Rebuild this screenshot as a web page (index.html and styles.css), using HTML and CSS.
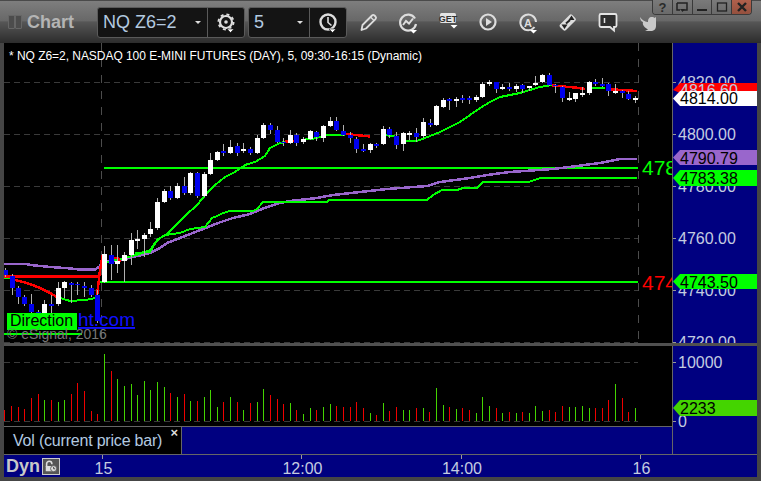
FILE: index.html
```html
<!DOCTYPE html>
<html lang="en">
<head>
<meta charset="utf-8">
<title>Chart</title>
<link rel="stylesheet" href="styles.css">
</head>
<body>
<div class="window">
  <header class="toolbar">
    <div class="grip"><span class="grip-bar"></span><span class="grip-bar"></span></div>
    <div class="title">Chart</div>
    <div class="combo symbol">
      <div class="combo-field"><span class="combo-text">NQ Z6=2</span><span class="caret"></span></div>
      <div class="combo-btn">
        <svg class="icon" viewBox="0 0 24 24"><circle cx="12" cy="12" r="6" fill="none" stroke="#ddd" stroke-width="2.200"/><circle cx="12" cy="12" r="7.600" fill="none" stroke="#ddd" stroke-width="1.800" stroke-dasharray="3 3"/><circle cx="12" cy="12" r="1.800" fill="#ddd"/><path d="M13 19h7l-3.500 3.500z" fill="#fff" stroke="#111" stroke-width=".6"/></svg>
      </div>
    </div>
    <div class="combo interval">
      <div class="combo-field"><span class="combo-text">5</span><span class="caret"></span></div>
      <div class="combo-btn">
        <svg class="icon" viewBox="0 0 24 24"><circle cx="12" cy="12" r="7.500" fill="none" stroke="#ddd" stroke-width="2.400"/><path d="M12 7v5.500l3.500 3" fill="none" stroke="#ddd" stroke-width="1.600"/><path d="M13 19h7l-3.500 3.500z" fill="#fff" stroke="#111" stroke-width=".6"/></svg>
      </div>
    </div>
    <div class="tools">
      <svg class="icon" viewBox="0 0 24 24"><path d="M5.500 20l1-5L16 5.500a1.800 1.800 0 0 1 2.500 0l1 1a1.800 1.800 0 0 1 0 2.500L10 18.500z" fill="none" stroke="#ddd" stroke-width="1.800" stroke-linejoin="round"/><path d="M14.500 7l3.500 3.500" stroke="#ddd" stroke-width="1.200"/></svg>
      <svg class="icon" viewBox="0 0 24 24"><path d="M19 8.500A8 8 0 1 0 20 14" fill="none" stroke="#ddd" stroke-width="2.200"/><path d="M7 15l3-4 3 2.500 4-5" fill="none" stroke="#ddd" stroke-width="2"/><path d="M14 20h7l-3.500 3.500z" fill="#fff"/></svg>
      <svg class="icon" viewBox="0 0 24 24"><rect x="4" y="3" width="16" height="10" rx="1.500" fill="#e4e4e4"/><text class="get" x="12" y="11.500">GET</text><path d="M14.500 15h7l-3.500 3.500z" fill="#fff"/></svg>
      <svg class="icon" viewBox="0 0 24 24"><circle cx="12" cy="12" r="7.500" fill="none" stroke="#ddd" stroke-width="2.200"/><path d="M10 8v8l6-4z" fill="#ddd"/></svg>
      <svg class="icon" viewBox="0 0 24 24"><path d="M18.500 17A7.800 7.800 0 1 1 20 12" fill="none" stroke="#ddd" stroke-width="2"/><text class="aglyph" x="12" y="16.500">A</text><path d="M14 20h7l-3.500 3.500z" fill="#fff"/></svg>
      <svg class="icon" viewBox="0 0 24 24"><path d="M4 14.500L13.500 5a2 2 0 0 1 2.800 0l3 3a2 2 0 0 1 0 2.800L10 20a2 2 0 0 1-2.800 0l-3.200-3a2 2 0 0 1 0-2.500z" fill="#ddd"/><path d="M15.500 5.500l3 4.500-6 0zM8.500 19l-3-4.500 6 0z" fill="#222"/><path d="M10 13.500l4-3.500" stroke="#222" stroke-width="2"/></svg>
      <svg class="icon" viewBox="0 0 24 24"><path d="M5 4h14a1.500 1.500 0 0 1 1.500 1.500v10A1.500 1.500 0 0 1 19 17h-1v3.500L14 17H5a1.500 1.500 0 0 1-1.500-1.500v-10A1.500 1.500 0 0 1 5 4z" fill="#2e2e2e" stroke="#e4e4e4" stroke-width="1.800"/><path d="M8.500 8v5" stroke="#e4e4e4" stroke-width="1.500"/></svg>
      <svg class="icon" viewBox="0 0 24 24"><path d="M4 7c2 3 4.500 4.500 8 5 0-3 1-5 4-5 1.200 0 2 .4 2.500 1L20 7v9c0 3-2 5-5.500 5H9l3-1.500C9 18 6 15 7 12c-1.500-.5-2.800-2-3-5z" fill="#c9c9c9"/></svg>
    </div>
    <div class="win-buttons">
      <div class="win-btn"><span class="win-q">?</span></div>
      <div class="win-btn"><svg class="win-icon" viewBox="0 0 14 12"><path d="M2 2h10v7H8M2 2v7h3" fill="none" stroke="#222" stroke-width="1.500"/><path d="M5 8h5l-2.500 3z" fill="#222"/></svg></div>
      <div class="win-btn"><svg class="win-icon" viewBox="0 0 14 12"><path d="M2 9h10" stroke="#222" stroke-width="2"/></svg></div>
      <div class="win-btn"><svg class="win-icon" viewBox="0 0 14 12"><rect x="2.500" y="2" width="9" height="8" fill="none" stroke="#222" stroke-width="1.300"/></svg></div>
      <div class="win-btn close"><svg class="win-icon" viewBox="0 0 14 12"><path d="M3 2l8 8M11 2l-8 8" stroke="#222" stroke-width="2.400"/></svg></div>
    </div>
  </header>

  <main class="main">
    <section class="price-pane">
      <svg class="plot" width="668" height="300" viewBox="4 43 668 300">
        <g class="grid">
          <path d="M4 82.500H638M4 134.500H638M4 186.500H638M4 238.500H638M4 290.500H638M4 342.500H638"/>
        </g>
        <path class="vgrid" d="M101.500 43V343M638.500 43V343"/>
        <text class="chart-title" x="9" y="60">* NQ Z6=2, NASDAQ 100 E-MINI FUTURES (DAY), 5, 09:30-16:15 (Dynamic)</text>

        <path class="level" d="M4 334H82"/>
        <path class="level" d="M104 168H638"/>
        <path class="level" d="M100 282H638"/>
        <path class="purple" d="M4 264H25L35 265.500L50 267L65 268L80 269.500L95 269.500L100 266L104 260L111 262L120 260L133 257L150 253L160 248L167 243L180 238L203 229L218 223L233 218L250 214L267 207L280 203L290 201L317 198L333 195L360 192L387 189L427 186L440 182L470 178L487 175L510 172L553 169L577 166L600 163L620 159L637 159"/>
        <path class="green" d="M135 253L150 252L157 240L165 235L180 233L190 229L205 227L212 218L217 216L223 213L230 211L253 211L257 209L263 202L327 202L329 200L427 200L433 195L442 190L457 190L463 188L477 188L483 182L528 182L535 180L540 178L637 178"/>
        <path class="green" d="M4 278H10M57 297L70 301L85 300L96 298"/>
        <path class="green" d="M104 263L120 259L130 256.500L140 254L150 250L155 243L160 238L167 234L175 226L185 216L197 205L207 193L215 185L225 177L235 172L245 165L255 162L265 156L270 148L280 143L285 142M305 139L312 139L327 135L345 135M385 135L398 137M405 141L417 141L425 138L440 132L460 122L480 108L490 102L500 97L520 93L540 87L552 85M590 88L605 88"/>
        <path class="red" d="M4 276.700H100"/>
        <path class="red" d="M12 279L30 284L40 288L50 293L57 297M97 296L100 270L103 254M111 258H118L120 262M285 141.500L298 140.500M345 134L370 136.500M552 85.500L575 87.500L585 89M607 89L637 91"/>

        <path class="wick" d="M5.500 268V277M12.500 274V295M18.500 286V304M24.500 295V306M31.500 294V317M38.500 310V330M44.500 300V328M51.500 295V317M58.500 282V306M64.500 281V298M71.500 282V303M77.500 282V295M84.500 282V297M91.500 285V297M97.500 290V323M104.500 246V283M111.500 245V280M117.500 245V273M124.500 252V282M131.500 233V265M137.500 230V249M144.500 233V257M150.500 222V237M157.500 198V230M164.500 189V203M170.500 186V200M177.500 183V199M184.500 177V195M190.500 172V195M197.500 172V198M204.500 172V197M210.500 153V175M217.500 151V161M223.500 144V156M230.500 140V154M237.500 143V156M243.500 143V153M250.500 147V155M257.500 135V154M263.500 123V139M270.500 123V134M277.500 126V143M283.500 138V146M290.500 130V144M296.500 133V146M303.500 137V144M310.500 130V140M316.500 131V141M323.500 125V142M330.500 117V127M336.500 117V131M343.500 125V136M350.500 132V143M356.500 137V153M363.500 144V152M370.500 143V153M376.500 143V148M383.500 126V145M389.500 127V138M396.500 132V149M403.500 132V151M409.500 131V140M416.500 128V142M423.500 118V138M430.500 119V127M436.500 105V126M443.500 98V108M449.500 98V110M456.500 97V107M462.500 95V103M469.500 96V104M476.500 95V102M482.500 82V98M489.500 80V86M496.500 82V93M502.500 84V90M509.500 83V91M516.500 84V92M522.500 84V93M529.500 86V91M535.500 76V86M542.500 74V83M549.500 73V86M555.500 84V93M562.500 86V102M569.500 92V101M575.500 93V102M582.500 87V97M589.500 81V95M595.500 79V86M602.500 78V87M608.500 83V96M615.500 84V94M622.500 90V98M628.500 91V100M635.500 96V103"/>
        <path class="body-white" d="M42 304h5V326h-5zM56 288h5V304h-5zM62 282h5V288h-5zM102 254h5V282h-5zM115 261h5V264h-5zM122 255h5V261h-5zM129 240h5V255h-5zM135 239h5V241h-5zM142 235h5V239h-5zM148 229h5V234h-5zM155 202h5V228h-5zM162 191h5V202h-5zM175 186h5V198h-5zM188 173h5V193h-5zM202 174h5V196h-5zM208 160h5V174h-5zM215 152h5V160h-5zM228 147h5V153h-5zM241 149h5V151h-5zM255 138h5V153h-5zM261 125h5V138h-5zM288 135h5V143h-5zM301 139h5V142h-5zM308 131h5V139h-5zM321 126h5V138h-5zM328 121h5V126h-5zM368 144h5V150h-5zM381 129h5V144h-5zM401 133h5V144h-5zM407 133h5V135h-5zM421 122h5V136h-5zM434 106h5V125h-5zM441 100h5V107h-5zM454 99h5V101h-5zM474 97h5V100h-5zM480 84h5V97h-5zM487 82h5V84h-5zM500 87h5V89h-5zM514 86h5V89h-5zM527 86h5V88h-5zM533 83h5V85h-5zM540 75h5V82h-5zM567 98h5V100h-5zM573 93h5V99h-5zM580 93h5V95h-5zM587 82h5V93h-5zM613 91h5V93h-5zM633 98h5V100h-5z"/>
        <path class="body-blue" d="M3 270h5V275h-5zM10 276h5V288h-5zM16 288h5V297h-5zM22 297h5V304h-5zM29 304h5V312h-5zM36 312h5V327h-5zM49 304h5V306h-5zM69 283h5V285h-5zM75 284h5V285h-5zM82 286h5V288h-5zM89 288h5V295h-5zM95 295h5V321h-5zM109 255h5V264h-5zM168 191h5V198h-5zM182 186h5V193h-5zM195 173h5V196h-5zM221 151h5V153h-5zM235 146h5V153h-5zM248 149h5V153h-5zM268 125h5V130h-5zM275 130h5V142h-5zM281 142h5V143h-5zM294 135h5V143h-5zM314 132h5V137h-5zM334 121h5V130h-5zM341 131h5V135h-5zM348 135h5V138h-5zM354 139h5V149h-5zM361 149h5V151h-5zM374 144h5V146h-5zM387 129h5V135h-5zM394 136h5V145h-5zM414 133h5V137h-5zM428 123h5V125h-5zM447 99h5V101h-5zM460 98h5V100h-5zM467 98h5V100h-5zM494 82h5V89h-5zM507 87h5V89h-5zM520 85h5V89h-5zM547 75h5V85h-5zM553 85h5V86h-5zM560 87h5V98h-5zM593 82h5V84h-5zM600 84h5V86h-5zM606 84h5V91h-5zM620 91h5V93h-5zM626 94h5V99h-5z"/>

        <text class="big-green" x="642" y="175">4783.38</text>
        <text class="big-red" x="642" y="290">4743.50</text>

        <rect class="dir-box" x="7" y="313" width="70" height="17"/>
        <text class="dir-text" x="10" y="326">Direction</text>
        <text class="dir-link" x="78" y="326">ht.com</text>
        <text class="copyright" x="7" y="339">© eSignal, 2016</text>
      </svg>
      <svg class="axis" width="84" height="300" viewBox="673 43 84 300">
        <path class="tick" d="M673 82.500h3M673 134.500h3M673 186.500h3M673 238.500h3M673 290.500h3M673 342.500h3"/>
        <text class="axis-label" x="678" y="88">4820.00</text>
        <text class="axis-label" x="678" y="140">4800.00</text>
        <text class="axis-label" x="678" y="192">4780.00</text>
        <text class="axis-label" x="678" y="244">4760.00</text>
        <text class="axis-label" x="678" y="296">4740.00</text>
        <text class="axis-label" x="678" y="348">4720.00</text>
        <path class="tag-red" d="M673 90L680 83H757V93H680z"/>
        <text class="axis-label" x="680" y="96">4816.60</text>
        <path class="tag-white" d="M673 98.500L680 91H757V106H680z"/>
        <text class="tag-text" x="680" y="104">4814.00</text>
        <path class="tag-purple" d="M673 157.500L680 150H757V165H680z"/>
        <text class="tag-text" x="680" y="164">4790.79</text>
        <path class="tag-green" d="M673 178L680 170H757V186H680z"/>
        <text class="tag-text" x="680" y="184">4783.38</text>
        <path class="tag-green" d="M673 281.500L680 274H757V289H680z"/>
        <text class="tag-text" x="680" y="288">4743.50</text>
      </svg>
    </section>
    <div class="divider"></div>
    <section class="lower">
      <div class="lower-left">
        <svg class="plot vol" width="668" height="80" viewBox="4 346 668 80">
          <path class="grid-line" d="M4 362.500H638M4 421.500H638"/>
          <path class="vol-green" d="M44.500 400V421M58.500 402V421M64.500 400V421M104.500 354V421M117.500 379V421M124.500 386V421M131.500 384V421M137.500 395V421M144.500 381V421M150.500 390V421M157.500 382V421M164.500 387V421M177.500 397V421M190.500 401V421M204.500 397V421M210.500 390V421M217.500 407V421M230.500 397V421M243.500 410V421M257.500 402V421M263.500 389V421M290.500 403V421M303.500 414V421M310.500 408V421M323.500 407V421M330.500 404V421M370.500 413V421M383.500 403V421M403.500 410V421M409.500 410V421M423.500 408V421M436.500 388V421M443.500 405V421M456.500 409V421M476.500 413V421M482.500 397V421M489.500 406V421M502.500 413V421M516.500 413V421M529.500 413V421M535.500 406V421M542.500 411V421M569.500 407V421M575.500 407V421M582.500 406V421M589.500 408V421M615.500 384V421M635.500 408V421"/>
          <path class="vol-red" d="M4.500 410V421M11.500 406V421M18.500 407V421M24.500 409V421M31.500 398V421M38.500 394V421M51.500 400V421M71.500 394V421M77.500 383V421M84.500 391V421M91.500 411V421M97.500 414V421M111.500 371V421M170.500 393V421M184.500 394V421M197.500 401V421M223.500 402V421M237.500 402V421M250.500 403V421M270.500 395V421M277.500 399V421M283.500 404V421M296.500 410V421M316.500 410V421M336.500 406V421M343.500 407V421M350.500 407V421M356.500 402V421M363.500 408V421M376.500 415V421M389.500 411V421M396.500 407V421M416.500 408V421M429.500 412V421M449.500 407V421M462.500 408V421M469.500 410V421M496.500 408V421M509.500 412V421M522.500 412V421M549.500 410V421M555.500 412V421M562.500 406V421M595.500 408V421M602.500 408V421M608.500 400V421M622.500 398V421M628.500 412V421"/>
        </svg>
        <div class="tab-row">
          <div class="tab"><span class="tab-label">Vol (current price bar)</span><span class="tab-close">×</span></div>
        </div>
      </div>
      <svg class="axis" width="84" height="108" viewBox="673 346 84 108">
        <path class="tick" d="M673 362.500h3M673 421.500h3"/>
        <text class="axis-label" x="678" y="368">10000</text>
        <text class="axis-label" x="678" y="427">0</text>
        <path class="tag-vol" d="M673 408L680 400H757V416H680z"/>
        <text class="tag-text" x="680" y="414">2233</text>
      </svg>
    </section>
    <footer class="time-axis">
      <span class="dyn">Dyn</span>
      <span class="lock">
        <svg class="lock-icon" viewBox="0 0 16 16"><path d="M3 9V5.500a3 3 0 0 1 6 0V6" fill="none" stroke="#ddd" stroke-width="1.800"/><rect x="2" y="8" width="7" height="6" fill="#ddd"/><circle cx="11" cy="11" r="3.500" fill="#ddd" stroke="#555"/><path d="M11 9v2.200h1.800" fill="none" stroke="#333"/></svg>
      </span>
      <svg class="time-scale" width="669" height="23" viewBox="88 454 669 23">
        <path class="tick" d="M104.500 455v4M642.500 455v4M303.500 455v4M463.500 455v4"/>
        <text class="time-label" x="105.500" y="474">15</text>
        <text class="time-label" x="304.500" y="474">12:00</text>
        <text class="time-label" x="464" y="474">14:00</text>
        <text class="time-label" x="643.500" y="474">16</text>
      </svg>
    </footer>
  </main>
</div>
</body>
</html>
```
FILE: styles.css
```css
* { box-sizing: border-box; }
html, body { margin: 0; padding: 0; background: #444; }
body { width: 761px; height: 481px; overflow: hidden; font-family: "Liberation Sans", Arial, sans-serif; }
svg { display: block; }
text { font-family: "Liberation Sans", Arial, sans-serif; }

.window { width: 761px; height: 481px; display: flex; flex-direction: column; background: #454545; }

.toolbar {
  position: relative;
  height: 43px;
  flex: none;
  display: flex;
  align-items: center;
  padding-left: 8px;
  border-top: 1px solid #4a4a4a;
  background: linear-gradient(#7e7e7e 0, #686868 47%, #565656 50%, #2c2c2c 100%);
}
.grip { display: flex; width: 19px; flex: none; }
.grip-bar { width: 7px; height: 14px; border: 1px solid #666; border-radius: 1px; background: #4c4c4c; }
.title { width: 70px; flex: none; font-size: 18px; font-weight: 700; color: #b4b4b4; }
.combo { display: flex; height: 31px; flex: none; background: #141414; border: 1px solid #5a5a5a; border-radius: 3px; }
.symbol { width: 148px; }
.interval { width: 99px; margin-left: 3px; }
.combo-field { display: flex; align-items: center; justify-content: space-between; flex: 1; padding: 0 5px 0 5px; border-right: 1px solid #5a5a5a; }
.combo-text { font-size: 18px; color: #b3cae0; }
.caret { width: 0; height: 0; border: 3px solid transparent; border-top: 3px solid #ddd; border-bottom: 0; margin-right: 1px; }
.combo-btn { width: 36px; flex: none; display: flex; align-items: center; justify-content: center; }
.icon { width: 24px; height: 24px; flex: none; }
.tools { display: flex; gap: 16px; margin-left: 9px; }
.get { font-size: 9px; font-weight: 700; fill: #333; text-anchor: middle; }
.aglyph { font-size: 11px; font-weight: 700; fill: #ddd; text-anchor: middle; }

.win-buttons {
  position: absolute;
  top: -1px;
  left: 652px;
  display: flex;
  width: 100px;
  height: 15px;
  border: 1px solid #3a3a3a;
  border-top: 0;
  border-radius: 0 0 4px 4px;
  overflow: hidden;
}
.win-btn { flex: 1; display: flex; align-items: center; justify-content: center; background: linear-gradient(#7a7a7a, #6a6a6a); border-right: 1px solid #3a3a3a; }
.win-btn.close { background: linear-gradient(#b0604c, #94503e); border-right: 0; }
.win-q { font-size: 13px; font-weight: 700; color: #2a2a2a; }
.win-icon { width: 14px; height: 12px; }

.main { flex: 1; display: flex; flex-direction: column; padding: 0 4px 4px; min-height: 0; }
.price-pane { display: flex; height: 300px; flex: none; }
.plot { background: #000; flex: none; }
.axis { flex: none; margin-left: 1px; background: #000080; overflow: hidden; }
.price-pane .plot { box-shadow: 1px 0 0 #666; }
.divider { height: 3px; flex: none; background: #505050; }
.lower { display: flex; height: 108px; flex: none; }
.lower-left { width: 669px; flex: none; border-right: 1px solid #666; }
.lower .axis { margin-left: 0; }
.tab-row { height: 28px; display: flex; background: #000080; border-top: 1px solid #666; }
.tab { position: relative; width: 178px; background: #000; border-right: 1px solid #666; display: flex; align-items: center; padding-left: 9px; }
.tab-label { font-size: 16px; letter-spacing: -0.2px; color: #b3cae0; }
.tab-close { position: absolute; right: 3px; top: 0; font-size: 13px; font-weight: 700; line-height: 12px; color: #ddd; }

.time-axis { display: flex; align-items: center; height: 23px; flex: none; background: #000080; border-top: 1px solid #666; padding-left: 2px; }
.dyn { font-size: 18px; font-weight: 700; color: #c8c8c8; width: 36px; flex: none; }
.lock { width: 18px; height: 17px; flex: none; background: #555; border: 1px solid #ccc; display: flex; align-items: center; justify-content: center; }
.lock-icon { width: 14px; height: 14px; }
.time-scale { margin-left: 26px; flex: none; margin-top: -1px; }
.time-label { font-size: 16px; fill: #c4cce0; text-anchor: middle; }

.grid path, .grid-line { fill: none; stroke: #3a3a3a; stroke-width: 1; stroke-dasharray: 6 4; }
.vgrid { fill: none; stroke: #4c4c4c; stroke-width: 1; stroke-dasharray: 8 8; }
.chart-title { font-size: 12px; letter-spacing: -0.04px; fill: #fff; }
.level, .green { fill: none; stroke: #00ff00; stroke-width: 2; shape-rendering: crispEdges; }
.purple { fill: none; stroke: #9966cc; stroke-width: 2.500; shape-rendering: crispEdges; }
.red { fill: none; stroke: #ff0000; stroke-width: 2.500; shape-rendering: crispEdges; }
.wick { fill: none; stroke: #b0b0b0; stroke-width: 1; shape-rendering: crispEdges; }
.body-white { fill: #fff; shape-rendering: crispEdges; }
.body-blue { fill: #0000ee; shape-rendering: crispEdges; }
.big-green, .big-red { font-size: 21px; }
.big-green { fill: #00ff00; }
.big-red { fill: #ff0000; }
.dir-box { fill: #00ff00; }
.dir-text { font-size: 16px; fill: #000; }
.dir-link { font-size: 19px; fill: #1010ff; text-decoration: underline; }
.copyright { font-size: 14px; fill: #777; }

.tick { fill: none; stroke: #999; stroke-width: 1; }
.axis-label { font-size: 16px; fill: #c4cce0; }
.tag-text { font-size: 16px; fill: #000; }
.tag-red { fill: #ff0000; }
.tag-white { fill: #ffffff; }
.tag-purple { fill: #9966cc; }
.tag-green { fill: #00ff00; }
.tag-vol { fill: #44d400; }
.vol-green, .vol-red { fill: none; stroke-width: 1.500; shape-rendering: crispEdges; }
.vol-green { stroke: #44d400; }
.vol-red { stroke: #ee0000; }
```
